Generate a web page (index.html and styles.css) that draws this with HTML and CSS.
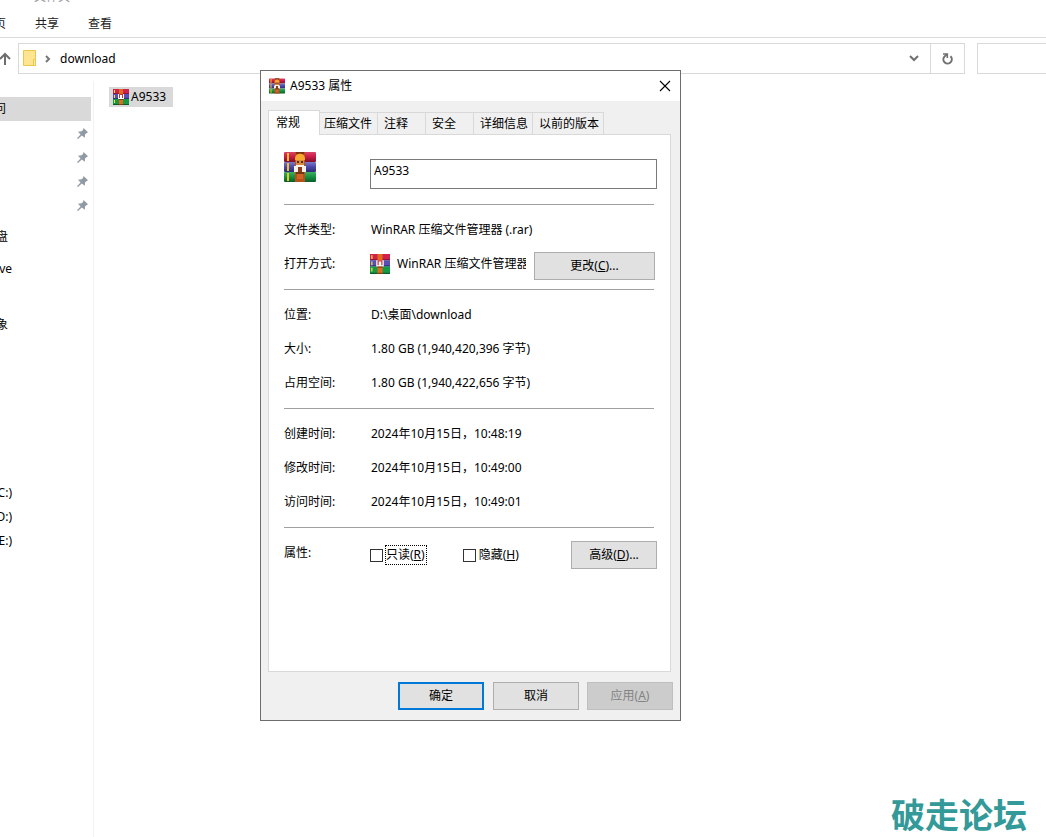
FILE: index.html
```html
<!DOCTYPE html>
<html lang="zh-CN">
<head>
    <meta charset="UTF-8">
    <meta name="viewport" content="width=device-width, initial-scale=1.0">
    <title>download</title>
    <link rel="stylesheet" href="styles.css">
</head>
<body>
    <svg class="defs" aria-hidden="true">
        <defs>
            <linearGradient id="red" x1="0" y1="0" x2="0" y2="1">
                <stop offset="0" stop-color="#d8456a"/><stop offset="0.4" stop-color="#d0204c"/><stop offset="1" stop-color="#7d0f2c"/>
            </linearGradient>
            <linearGradient id="blue" x1="0" y1="0" x2="0" y2="1">
                <stop offset="0" stop-color="#7a78c8"/><stop offset="0.5" stop-color="#4a48a8"/><stop offset="1" stop-color="#2c2a70"/>
            </linearGradient>
            <linearGradient id="green" x1="0" y1="0" x2="0" y2="1">
                <stop offset="0" stop-color="#3fae62"/><stop offset="0.5" stop-color="#149040"/><stop offset="1" stop-color="#0a5c28"/>
            </linearGradient>
            <symbol id="rar" viewBox="0 0 32 32">
                <rect x="0" y="1" width="32" height="10" rx="1" fill="url(#red)"/>
                <rect x="0" y="11" width="32" height="10" rx="1" fill="url(#blue)"/>
                <rect x="0" y="21" width="32" height="10" rx="1" fill="url(#green)"/>
                <path d="M3 2h2v8H3zM3 12h2v8H3zM3 22h2v8H3z" fill="#f5c322"/>
                <rect x="11" y="1" width="10" height="30" fill="#b9501a"/>
                <path d="M12 1h8v2h-8z" fill="#7a3410"/>
                <path d="M11 8c0-7 10-7 10 0v1H11z" fill="#f6a92c"/>
                <path d="M12 9h8v6h-8z" fill="#d98a3a"/>
                <path d="M13 10h2v2h-2zM17 10h2v2h-2z" fill="#5a2b12"/>
                <path d="M12 14h8v1h2v6h-4v-5h-4v5h-4v-6h2z" fill="#f4f0ea"/>
                <path d="M14 16h4v5h-4z" fill="#8a3c1c"/>
                <path d="M12 21h8v2h-8z" fill="#7a3410"/>
                <path d="M13 23h6v5h-6z" fill="#cf6426"/>
            </symbol>
            <symbol id="rar-small" viewBox="0 0 16 16">
                <rect width="16" height="5" fill="#d0204c"/><rect y="4" width="16" height="1" fill="#96143a"/>
                <rect y="5" width="16" height="5" fill="#5550b4"/><rect y="9" width="16" height="1" fill="#34307c"/>
                <rect y="10" width="16" height="6" fill="#149a44"/><rect y="15" width="16" height="1" fill="#0b5c29"/>
                <path d="M1 1h1v3H1zM1 6h1v3H1zM1 11h1v3H1z" fill="#ffdc38"/>
                <rect x="6" width="4" height="16" fill="#e26a1c"/>
                <path d="M5 5h6v5H5z" fill="#fff"/>
                <path d="M6 5h1v4H6zM9 5h1v4H9zM7 5h2v1H7z" fill="#d0302c"/>
                <path d="M6 10h4v1H6zM6 15h4v1H6z" fill="#8a3c12"/>
            </symbol>
            <symbol id="pin" viewBox="0 0 11 11">
                <path d="M6.5 0L11 4.2L9.4 5.2L8 6.5L7.8 9.8L4.8 7.4L1 11L0 10.2L3.6 6.4L1 3.7L4.6 3.3L6 2z" fill="#8f9aa4"/>
            </symbol>
        </defs>
    </svg>

    <div class="explorer">
        <div class="caption">文件夹</div>
        <nav class="menu">
            <a class="menu-home" href="#">页</a>
            <a href="#">共享</a>
            <a href="#">查看</a>
        </nav>
        <div class="toolbar">
            <button class="up" aria-label="向上">
                <svg width="12" height="14" viewBox="0 0 12 14"><path d="M5 13V2M0 7L5 2L10 7" fill="none" stroke="#6e6e6e" stroke-width="2"/></svg>
            </button>
            <div class="address">
                <svg width="14" height="17" viewBox="0 0 14 17"><path d="M0.5 0.5h12v15h-12z" fill="#ffe592" stroke="#ecc648"/><path d="M10.5 9.5h2v6h-2z" fill="#fff0b5" stroke="#ecc648"/></svg>
                <svg class="crumb" width="6" height="8" viewBox="0 0 6 8"><path d="M1 1L4 4L1 7" fill="none" stroke="#777" stroke-width="2"/></svg>
                <span class="path">download</span>
                <button class="drop" aria-label="历史">
                    <svg width="10" height="7" viewBox="0 0 10 7"><path d="M1 1L5 5L9 1" fill="none" stroke="#707070" stroke-width="2"/></svg>
                </button>
                <button class="refresh" aria-label="刷新">
                    <svg width="11" height="12" viewBox="0 0 11 12"><path d="M8.4 3.2A4.2 4.2 0 1 1 2.4 3.6L5 1.2" fill="none" stroke="#707070" stroke-width="2"/><path d="M1 1h4.3v4" fill="none" stroke="#707070" stroke-width="1.6"/></svg>
                </button>
            </div>
            <input class="search" type="text" aria-label="搜索">
        </div>
        <div class="main">
            <aside class="sidebar">
                <div class="item selected"><span class="edge-short">问</span></div>
                <div class="item pinned"><svg width="11" height="11"><use href="#pin"/></svg></div>
                <div class="item pinned"><svg width="11" height="11"><use href="#pin"/></svg></div>
                <div class="item pinned"><svg width="11" height="11"><use href="#pin"/></svg></div>
                <div class="item pinned"><svg width="11" height="11"><use href="#pin"/></svg></div>
                <div class="item spaced"><span class="edge-mid">盘</span></div>
                <div class="item spaced"><span class="edge">ve</span></div>
                <div class="item objects"><span class="edge-mid">象</span></div>
                <div class="item drives"><span class="edge">C:)</span></div>
                <div class="item"><span class="edge">D:)</span></div>
                <div class="item"><span class="edge">E:)</span></div>
            </aside>
            <div class="files">
                <div class="file"><svg width="16" height="16"><use href="#rar-small"/></svg>A9533</div>
            </div>
        </div>
        <div class="watermark">破走论坛</div>
    </div>

    <form class="dialog" role="dialog" aria-label="A9533 属性">
        <div class="titlebar">
            <svg width="16" height="16"><use href="#rar"/></svg>
            <span>A9533 属性</span>
            <button type="button" class="close" aria-label="关闭">
                <svg width="12" height="12" viewBox="0 0 12 12"><path d="M1 1L11 11M11 1L1 11" stroke="#000" stroke-width="1.1"/></svg>
            </button>
        </div>
        <div class="content">
            <div class="tabs" role="tablist">
                <button type="button" class="tab active" role="tab" aria-selected="true">常规</button>
                <button type="button" class="tab tight" role="tab">压缩文件</button>
                <button type="button" class="tab wide" role="tab">注释</button>
                <button type="button" class="tab wide" role="tab">安全</button>
                <button type="button" class="tab" role="tab">详细信息</button>
                <button type="button" class="tab" role="tab">以前的版本</button>
            </div>
            <div class="pane">
                <div class="head">
                    <svg width="32" height="32"><use href="#rar"/></svg>
                    <input class="name" type="text" value="A9533" aria-label="文件名">
                </div>
                <div class="section">
                    <div class="row"><span class="label">文件类型:</span><span>WinRAR 压缩文件管理器 (.rar)</span></div>
                    <div class="row">
                        <span class="label">打开方式:</span>
                        <svg class="app-icon" width="20" height="20"><use href="#rar-small"/></svg>
                        <span class="app">WinRAR 压缩文件管理器</span>
                        <button type="button" class="btn change">更改(<u>C</u>)...</button>
                    </div>
                </div>
                <div class="section">
                    <div class="row"><span class="label">位置:</span><span>D:\桌面\download</span></div>
                    <div class="row"><span class="label">大小:</span><span>1.80 GB (1,940,420,396 字节)</span></div>
                    <div class="row"><span class="label">占用空间:</span><span>1.80 GB (1,940,422,656 字节)</span></div>
                </div>
                <div class="section">
                    <div class="row"><span class="label">创建时间:</span><span>2024年10月15日，10:48:19</span></div>
                    <div class="row"><span class="label">修改时间:</span><span>2024年10月15日，10:49:00</span></div>
                    <div class="row"><span class="label">访问时间:</span><span>2024年10月15日，10:49:01</span></div>
                </div>
                <div class="section">
                    <div class="row">
                        <span class="label">属性:</span>
                        <div class="checks">
                            <input type="checkbox" id="readonly"><label class="focused" for="readonly">只读(<u>R</u>)</label>
                            <input type="checkbox" id="hidden"><label for="hidden">隐藏(<u>H</u>)</label>
                        </div>
                        <button type="button" class="btn advanced">高级(<u>D</u>)...</button>
                    </div>
                </div>
            </div>
            <div class="actions">
                <button type="button" class="btn primary">确定</button>
                <button type="button" class="btn">取消</button>
                <button type="button" class="btn" disabled>应用(<u>A</u>)</button>
            </div>
        </div>
    </form>
</body>
</html>
```
FILE: styles.css
```css
* {
    box-sizing: border-box;
}

body {
    margin: 0;
    background-color: #fff;
    color: #000;
    font-family: "Noto Sans", "Noto Sans CJK SC", sans-serif;
    font-size: 12px;
    line-height: 18px;
    overflow: hidden;
}

button, input {
    font: inherit;
    color: inherit;
    margin: 0;
    padding: 0;
    border-radius: 0;
}

button {
    border: none;
    background: none;
}

svg {
    display: block;
    flex: none;
}

.defs {
    position: absolute;
    width: 0;
    height: 0;
}

/* explorer window */
.explorer {
    position: relative;
    display: flex;
    flex-direction: column;
    height: 100vh;
    overflow: hidden;
}

.caption {
    display: flex;
    align-items: flex-end;
    height: 3px;
    padding-left: 34px;
    color: #999;
    line-height: 12px;
    overflow: hidden;
}

.menu {
    display: flex;
    align-items: center;
    gap: 29px;
    height: 35px;
    padding-top: 8px;
    border-bottom: 1px solid #dadbdc;
}

.menu a {
    color: #222;
    text-decoration: none;
}

.menu-home {
    display: flex;
    justify-content: flex-end;
    width: 6px;
}

.toolbar {
    display: flex;
    align-items: center;
    padding-top: 5px;
}

.up {
    width: 18px;
}

.address {
    display: flex;
    flex: 1;
    align-items: center;
    height: 31px;
    padding-left: 4px;
    border: 1px solid #d9d9d9;
}

.crumb {
    margin: 0 9px 0 8px;
}

.path {
    flex: 1;
}

.drop {
    display: flex;
    justify-content: center;
    width: 33px;
}

.refresh {
    display: flex;
    align-items: center;
    justify-content: center;
    align-self: stretch;
    width: 34px;
    border-left: 1px solid #d9d9d9;
}

.search {
    width: 69px;
    height: 31px;
    margin-left: 12px;
    border: 1px solid #d9d9d9;
    border-right: none;
}

.main {
    display: flex;
    flex: 1;
    padding-top: 7px;
}

.sidebar {
    width: 94px;
    padding-top: 16px;
    border-right: 1px solid #f3f3f3;
}

.item {
    display: flex;
    align-items: center;
    width: 91px;
    height: 24px;
    overflow: hidden;
}

.selected {
    background-color: #d9d9d9;
}

.pinned {
    justify-content: flex-end;
    padding-right: 3px;
}

.spaced {
    margin-top: 8px;
}

.objects {
    margin-top: 32px;
}

.drives {
    margin-top: 144px;
}

/* names cut off by the left edge of the window */
.edge, .edge-mid, .edge-short {
    display: flex;
    justify-content: flex-end;
    width: 12px;
}

.edge-mid {
    width: 8px;
}

.edge-short {
    width: 6px;
}

.files {
    padding: 6px 15px;
}

.file {
    display: flex;
    align-items: center;
    gap: 2px;
    height: 20px;
    padding: 0 7px 0 4px;
    background-color: #d9d9d9;
}

.watermark {
    position: absolute;
    right: 19px;
    bottom: 2px;
    color: #399;
    font-size: 34px;
    font-weight: 700;
    line-height: 40px;
}

/* properties dialog */
.dialog {
    position: absolute;
    top: 70px;
    left: 260px;
    width: 421px;
    border: 1px solid #6d6d6d;
    background-color: #f0f0f0;
}

.titlebar {
    display: flex;
    align-items: center;
    gap: 5px;
    height: 30px;
    padding: 0 9px 1px 8px;
    background-color: #fff;
}

.close {
    margin-left: auto;
}

.content {
    padding: 9px 7px 10px;
}

.tabs {
    display: flex;
    align-items: flex-end;
}

.tab {
    height: 22px;
    padding: 1px 4px 0 6px;
    border: 1px solid #d9d9d9;
    border-left: none;
    border-bottom: none;
}

.tab.active {
    height: 25px;
    width: 52px;
    padding: 0 12px 1px 0;
    margin-bottom: -1px;
    border-left: 1px solid #d9d9d9;
    background-color: #fff;
    z-index: 1;
}

.tab.tight {
    padding: 1px 5px 0 4px;
}

.tab.wide {
    padding-right: 17px;
}

.pane {
    width: 403px;
    height: 538px;
    padding: 0 16px 0 15px;
    border: 1px solid #d9d9d9;
    background-color: #fff;
}

.head {
    display: flex;
    align-items: flex-start;
    height: 69px;
    padding-top: 16px;
}

.name {
    flex: 1;
    height: 30px;
    margin: 8px -3px 0 54px;
    padding: 0 3px 8px;
    border: 1px solid #7a7a7a;
    background-color: #fff;
}

.section {
    padding: 8px 0;
    border-top: 1px solid #a0a0a0;
}

.row {
    display: flex;
    align-items: center;
    height: 34px;
    white-space: nowrap;
}

.label {
    flex: none;
    width: 87px;
}

.app-icon {
    margin: 0 7px 0 -1px;
}

.app {
    width: 129px;
    overflow: hidden;
}

.btn {
    width: 86px;
    height: 28px;
    border: 1px solid #adadad;
    background-color: #e1e1e1;
}

.btn.primary {
    margin-right: 1px;
    border: 2px solid #0078d7;
}

.btn:disabled {
    border-color: #bfbfbf;
    background-color: #ccc;
    color: #838383;
}

.change, .advanced {
    align-self: flex-end;
    margin: 0 -1px 1px auto;
}

.change {
    width: 121px;
}

.advanced {
    margin-right: -3px;
}

.checks {
    display: flex;
    align-items: center;
    padding-top: 4px;
    margin-left: -1px;
}

.checks input {
    appearance: none;
    width: 13px;
    height: 13px;
    border: 1px solid #333;
    background-color: #fff;
}

.checks label {
    margin-left: 2px;
    border: 1px solid transparent;
}

.checks .focused {
    margin-right: 36px;
    padding-right: 1px;
    border: 1px dotted #000;
}

.actions {
    display: flex;
    justify-content: flex-end;
    gap: 8px;
    padding-top: 10px;
}
```
